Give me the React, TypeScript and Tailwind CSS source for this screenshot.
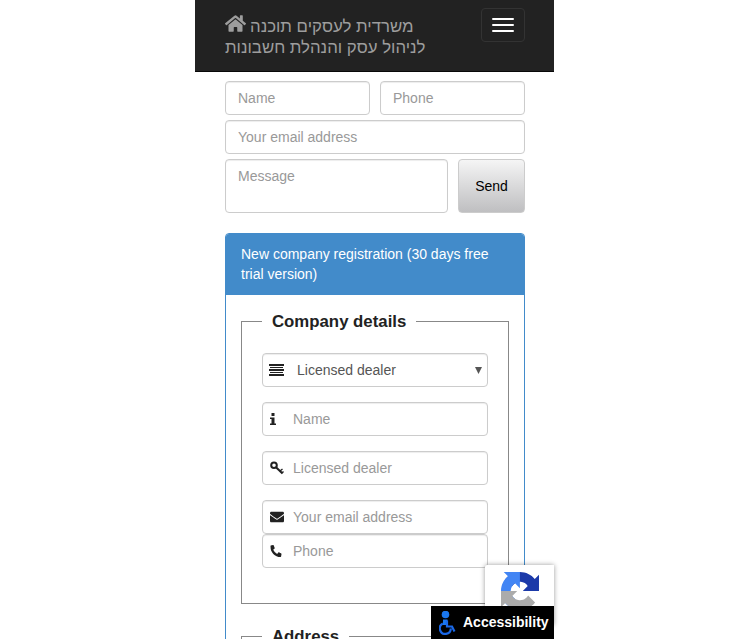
import React from 'react';
import { FaHome, FaEnvelope, FaPhoneAlt } from 'react-icons/fa';

const inputCls =
  'block h-[34px] w-full min-w-0 rounded-[4px] border border-[#ccc] bg-white px-3 text-[14px] text-[#555] shadow-[inset_0_1px_1px_rgba(0,0,0,0.075)] outline-none placeholder:text-[#999]';
const iconInputCls =
  'block h-[34px] w-full rounded-[4px] border border-[#ccc] bg-white pl-[30px] pr-3 text-[14px] text-[#555] shadow-[inset_0_1px_1px_rgba(0,0,0,0.075)] outline-none placeholder:text-[#999]';
const legendCls = 'px-[10px] pt-[2px] text-[16.8px] font-bold leading-[22px] text-[#222]';

function ListIcon() {
  return (
    <svg width="15" height="12" viewBox="0 0 15 12" fill="#222">
      <rect x="0" y="0" width="15" height="2" />
      <rect x="1" y="3" width="13" height="1" />
      <rect x="0" y="5" width="15" height="2" />
      <rect x="1" y="8" width="13" height="1" />
      <rect x="0" y="10" width="15" height="2" />
    </svg>
  );
}

function InfoIcon() {
  return (
    <svg width="6" height="12" viewBox="0 0 6 12" fill="#222">
      <rect x="1.5" y="0" width="3" height="3" />
      <path d="M0 4.5 H4.5 V10.5 H6 V12 H0 V10.5 H1.5 V6 H0 Z" />
    </svg>
  );
}

function KeyIcon() {
  return (
    <svg width="14" height="14" viewBox="0 0 14 14" fill="none" stroke="#222" strokeWidth="2">
      <circle cx="4" cy="4.2" r="2.8" />
      <path d="M6 6.2 L12.5 12.5" />
      <path d="M10 10 L12.5 8 M12 12 L13.5 10.5" strokeWidth="1.4" />
    </svg>
  );
}

function IconInput({ icon, placeholder, className }: { icon: React.ReactNode; placeholder: string; className?: string }) {
  return (
    <div className={`relative ${className ?? ''}`}>
      <span className="absolute left-[8px] top-0 flex h-[34px] items-center text-[#222]">{icon}</span>
      <input className={iconInputCls} placeholder={placeholder} />
    </div>
  );
}

function RecaptchaLogo() {
  return (
    <svg width="38" height="38" viewBox="0 0 64 64">
      <path d="M64 31.955l-.033-1.37V4.687l-7.16 7.16C50.948 4.674 42.033.093 32.05.093c-10.4 0-19.622 4.96-25.458 12.64l11.736 11.86a15.55 15.55 0 0 1 4.754-5.334c2.05-1.6 4.952-2.906 8.968-2.906.485 0 .86.057 1.135.163 4.976.393 9.288 3.14 11.828 7.124l-8.307 8.307L64 31.953" fill="#1c3aa9" />
      <path d="M31.862.094l-1.37.033H4.594l7.16 7.16C4.58 13.147 0 22.06 0 32.046c0 10.4 4.96 19.622 12.64 25.458L24.5 45.768a15.55 15.55 0 0 1-5.334-4.754c-1.6-2.05-2.906-4.952-2.906-8.968 0-.485.057-.86.163-1.135.393-4.976 3.14-9.288 7.124-11.828l8.307 8.307L31.86.094" fill="#4285f4" />
      <path d="M.001 32.045l.033 1.37v25.898l7.16-7.16c5.86 7.173 14.774 11.754 24.76 11.754 10.4 0 19.622-4.96 25.458-12.64L45.677 39.406a15.55 15.55 0 0 1-4.754 5.334c-2.05 1.6-4.952 2.906-8.968 2.906-.485 0-.86-.057-1.135-.163-4.976-.393-9.288-3.14-11.828-7.124l8.307-8.307-27.3.001" fill="#ababab" />
    </svg>
  );
}

function AccessIcon() {
  return (
    <svg width="18" height="24" viewBox="0 0 18 24" fill="none">
      <circle cx="6.5" cy="3.5" r="3.8" fill="#1a78f0" />
      <path d="M4 8.5 H8.5 V14 H4 Z" fill="#1a78f0" />
      <path d="M3.8 12.5 A5.5 5.5 0 1 0 11.8 17.5" stroke="#1a68e8" strokeWidth="2.2" />
      <path d="M8 9.5 V15.5 H13 L15.5 20.5" stroke="#1a68e8" strokeWidth="2.2" />
    </svg>
  );
}

export default function App() {
  return (
    <div className="relative h-[639px] w-[750px] overflow-hidden bg-white font-['Liberation_Sans',Arial,sans-serif] text-[14px] text-[#333]">
      <div className="ml-[195px] w-[359px]">
        {/* Navbar */}
        <header className="flex h-[72px] items-start justify-between border-b border-[#080808] bg-[#222] pl-[30px] pr-[29px]">
          <a className="mt-[11px] block w-[215px] text-[16.8px] leading-[21px] text-[#9d9d9d]">
            <FaHome className="relative top-[2px] mr-[4px] inline-block align-[0px] text-[21px]" />
            משרדית לעסקים תוכנה לניהול עסק והנהלת חשבונות
          </a>
          <button className="mt-[8px] flex h-[34px] w-[44px] flex-col items-center justify-center gap-[4px] rounded-[4px] border border-[#333]">
            <span className="block h-[2px] w-[22px] rounded-[1px] bg-white" />
            <span className="block h-[2px] w-[22px] rounded-[1px] bg-white" />
            <span className="block h-[2px] w-[22px] rounded-[1px] bg-white" />
          </button>
        </header>

        <main className="pl-[30px] pr-[29px] pt-[9px]">
          {/* Contact form */}
          <form className="flex flex-col gap-[5px]">
            <div className="flex gap-[10px]">
              <input className={inputCls} placeholder="Name" />
              <input className={inputCls} placeholder="Phone" />
            </div>
            <input className={inputCls} placeholder="Your email address" />
            <div className="flex gap-[10px]">
              <textarea
                className="h-[54px] w-[223px] resize-none rounded-[4px] border border-[#ccc] bg-white px-3 py-[6px] text-[14px] leading-[20px] text-[#555] shadow-[inset_0_1px_1px_rgba(0,0,0,0.075)] outline-none placeholder:text-[#999]"
                placeholder="Message"
              />
              <button className="h-[54px] w-[67px] rounded-[4px] border border-[#ccc] bg-gradient-to-b from-[#f5f5f5] to-[#bfbfc1] text-[14px] text-black">
                Send
              </button>
            </div>
          </form>

          {/* Registration panel */}
          <section className="mt-[20px] rounded-[4px] border border-[#428bca]">
            <div className="rounded-t-[3px] bg-[#428bca] px-[15px] pb-[11px] pt-[10px] text-[14px] leading-[20px] text-white">
              New company registration (30 days free trial version)
            </div>
            <div className="px-[15px] pb-[15px] pt-[14px]">
              <fieldset className="h-[295px] border border-[#888] px-[20px] pb-[35px]">
                <legend className={legendCls}>Company details</legend>
                <div className="mt-[20px] flex flex-col">
                  <div className="relative">
                    <span className="absolute left-[7px] top-0 flex h-[34px] items-center">
                      <ListIcon />
                    </span>
                    <select className="block h-[34px] w-full appearance-none rounded-[4px] border border-[#ccc] bg-white pl-[34px] text-[14px] text-[#555] shadow-[inset_0_1px_1px_rgba(0,0,0,0.075)] outline-none">
                      <option>Licensed dealer</option>
                    </select>
                    <svg className="absolute right-[6px] top-[14px]" width="7" height="7" viewBox="0 0 7 7" fill="#555">
                      <path d="M0 0 H7 L3.5 7 Z" />
                    </svg>
                  </div>
                  <IconInput className="mt-[15px]" icon={<InfoIcon />} placeholder="Name" />
                  <IconInput className="mt-[15px]" icon={<KeyIcon />} placeholder="Licensed dealer" />
                  <IconInput className="mt-[15px]" icon={<FaEnvelope className="text-[14px]" />} placeholder="Your email address" />
                  <IconInput icon={<FaPhoneAlt className="scale-x-[0.95] text-[12px]" />} placeholder="Phone" />
                </div>
              </fieldset>
              <fieldset className="mt-[20px] h-[100px] border border-[#888] px-[20px]">
                <legend className={legendCls}>Address</legend>
              </fieldset>
            </div>
          </section>
        </main>
      </div>

      {/* reCAPTCHA badge */}
      <div className="absolute left-[485px] top-[565px] h-[60px] w-[69px] rounded-tl-[2px] bg-white pl-[16px] pt-[7px] shadow-[0_0_5px_rgba(0,0,0,0.4)]">
        <RecaptchaLogo />
      </div>

      {/* Accessibility button */}
      <button className="absolute left-[431px] top-[606px] flex h-[33px] w-[123px] items-center bg-black pl-[8px] text-[14px] font-bold text-white">
        <span className="w-[24px]">
          <AccessIcon />
        </span>
        Accessibility
      </button>
    </div>
  );
}
